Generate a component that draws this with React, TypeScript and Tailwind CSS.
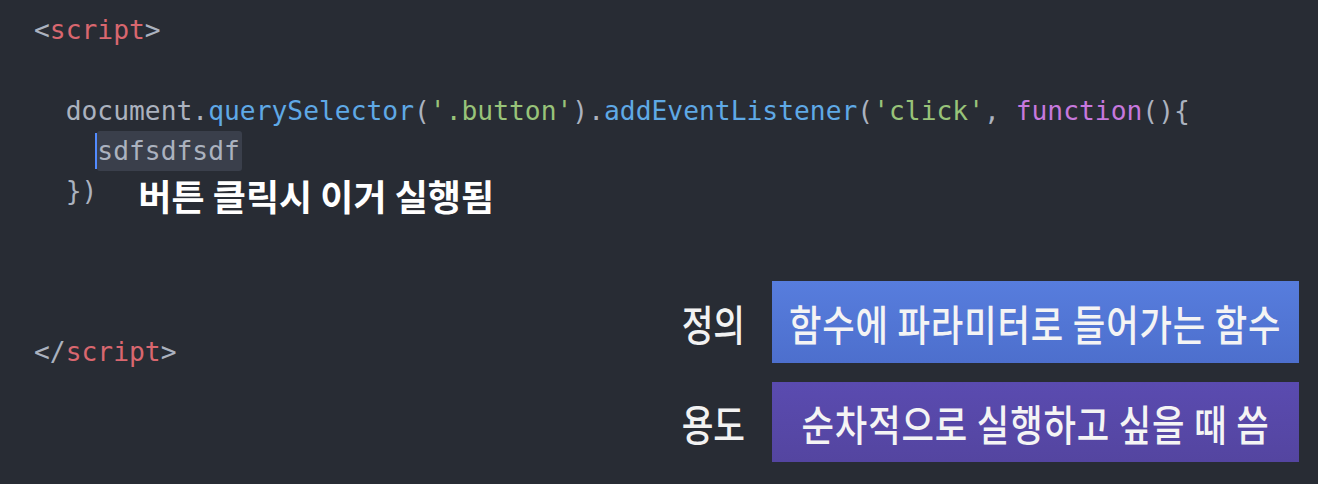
const mono = { fontFamily: '"DejaVu Sans Mono", "Liberation Mono", monospace' };

function Line({ children }: { children?: React.ReactNode }) {
  return <div className="h-[40.25px] leading-[40.25px] whitespace-pre">{children}</div>;
}

function Caption({ label, text, box }: { label: string; text: string; box: string }) {
  return (
    <div className="flex items-center gap-[27px]">
      <span className="inline-block w-[100px] text-[42px] font-medium text-[#f2f2f2] scale-x-[0.82] origin-right text-right whitespace-nowrap">
        {label}
      </span>
      <div className={`w-[527px] flex items-center justify-center ${box}`}>
        <span className="inline-block text-[42px] font-medium text-[#f4f4f4] tracking-[1px] scale-x-[0.84] whitespace-nowrap">
          {text}
        </span>
      </div>
    </div>
  );
}

export default function App() {
  return (
    <div
      className="w-[1318px] h-[484px] bg-[#282c34] grid overflow-hidden"
      style={{ fontFamily: '"Noto Sans CJK KR", "Noto Sans", sans-serif' }}
    >
      {/* code */}
      <div className="col-start-1 row-start-1 pt-[10px] pl-[34px] text-[26.3px] text-[#abb2bf]" style={mono}>
        <Line>
          {'<'}
          <span className="text-[#d9676f]">script</span>
          {'>'}
        </Line>
        <Line />
        <Line>
          {'  document.'}
          <span className="text-[#5fa9e6]">querySelector</span>
          {'('}
          <span className="text-[#98c379]">'.button'</span>
          {').'}
          <span className="text-[#5fa9e6]">addEventListener</span>
          {'('}
          <span className="text-[#98c379]">'click'</span>
          {', '}
          <span className="text-[#c678dd]">function</span>
          {'(){'}
        </Line>
        <Line>
          {'    '}
          <span className="relative inline-block leading-[40px] bg-[#3a3f4b] rounded-[3px] pr-[2px]">
            <span className="absolute -left-[2px] top-[2px] bottom-[2px] w-[2px] bg-[#528bff]" />
            sdfsdfsdf
          </span>
        </Line>
        <Line>
          {'  })'}
          <span
            className="inline-block align-top ml-[41px] mt-[4px] text-[36px] font-bold text-white"
            style={{ fontFamily: '"Noto Sans CJK KR", sans-serif' }}
          >
            버튼 클릭시 이거 실행됨
          </span>
        </Line>
        <Line />
        <Line />
        <Line />
        <Line>
          {'</'}
          <span className="text-[#d9676f]">script</span>
          {'>'}
        </Line>
      </div>

      {/* captions */}
      <div className="col-start-1 row-start-1 self-start justify-self-end mt-[281px] mr-[19px] flex flex-col gap-[19px]">
        <Caption label="정의" text="함수에 파라미터로 들어가는 함수" box="h-[82px] bg-gradient-to-b from-[#577ddd] to-[#4d6fcd]" />
        <Caption label="용도" text="순차적으로 실행하고 싶을 때 씀" box="h-[80px] bg-gradient-to-b from-[#5a4bb0] to-[#5445a0]" />
      </div>
    </div>
  );
}
